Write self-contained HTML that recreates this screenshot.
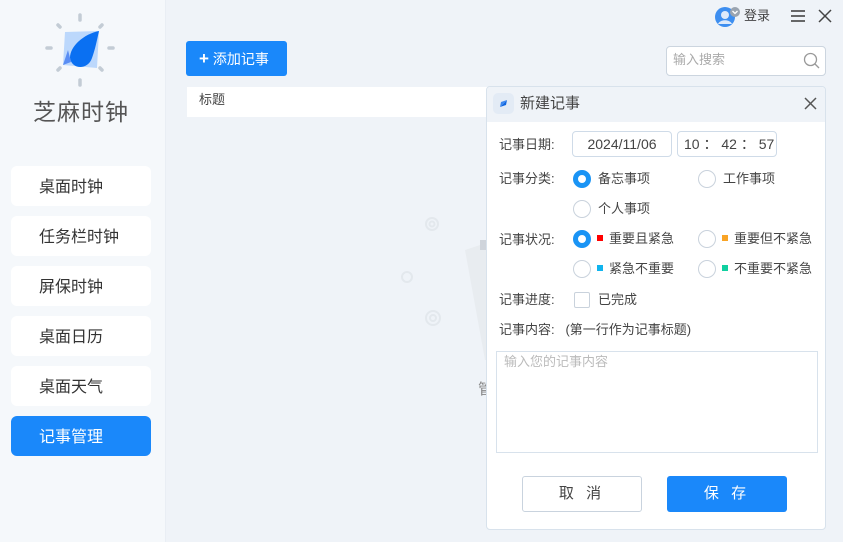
<!DOCTYPE html>
<html><head><meta charset="utf-8"><style>
*{margin:0;padding:0;box-sizing:border-box}
body{width:843px;height:542px;overflow:hidden;background:#eff3f8;font-family:"Liberation Sans","Noto Sans CJK SC",sans-serif;color:#333;position:relative}
.a{position:absolute;white-space:nowrap}
.side{left:0;top:0;width:166px;height:542px;background:#f5f8fb;border-right:1px solid #e9eef4}
.nav{left:11px;width:140px;height:40px;background:#fff;border-radius:6px;font-size:16px;line-height:40px;padding-left:28px;padding-top:2px;color:#333}
.nav.on{background:#1a88fa;color:#fff}
.lbl{font-size:13px;color:#444;line-height:18px}
.rad{width:18px;height:18px;border-radius:50%;border:1px solid #c9d2dc;background:#fff}
.rad.on{border:5px solid #1a94f5;background:#fff}
.opt{font-size:13px;color:#444;line-height:18px}
.sq{display:inline-block;width:6px;height:6px;margin-right:6px;vertical-align:2px}
</style></head><body>
<div class="a side"></div>
<svg class="a" style="left:40px;top:10px" width="80" height="80" viewBox="0 0 80 80">
<g stroke="#c3ccd5" stroke-width="3.5" stroke-linecap="round">
<line x1="40" y1="5" x2="40" y2="10"/><line x1="40" y1="70" x2="40" y2="75"/>
<line x1="7" y1="38" x2="11" y2="38"/><line x1="69" y1="38" x2="73" y2="38"/>
<line x1="18" y1="15" x2="20" y2="17"/><line x1="62" y1="15" x2="60" y2="17"/>
<line x1="18" y1="60" x2="20" y2="58"/><line x1="62" y1="60" x2="60" y2="58"/>
</g>
<polygon points="25,22 59,21 57,58 23,55" fill="#bcd8fc"/>
<path d="M59,21 C44,24 30,36 30,48 C32,60 48,60 52,48 C55,40 57,30 59,21Z" fill="#0a70f2"/>
<polygon points="23,55 31,52 28,40" fill="#5a8ef4"/>
</svg>
<div class="a" style="left:33px;top:93px;font-size:23px;color:#555;letter-spacing:1px">芝麻时钟</div>
<div class="a nav" style="top:166px">桌面时钟</div>
<div class="a nav" style="top:216px">任务栏时钟</div>
<div class="a nav" style="top:266px">屏保时钟</div>
<div class="a nav" style="top:316px">桌面日历</div>
<div class="a nav" style="top:366px">桌面天气</div>
<div class="a nav on" style="top:416px">记事管理</div>

<svg class="a" style="left:715px;top:6px" width="26" height="22" viewBox="0 0 26 22"><circle cx="10" cy="11" r="10" fill="#3d8ef0"/><circle cx="10" cy="9" r="4" fill="#dde9fa"/><path d="M3,18 C5,13 15,13 17,18Z" fill="#dde9fa"/><circle cx="20" cy="6" r="5" fill="#9aa4b0"/><path d="M17.5,5 L20,7.5 22.5,5" stroke="#fff" fill="none" stroke-width="1.3"/></svg>
<div class="a" style="left:744px;top:5px;font-size:13px;color:#444">登录</div>
<svg class="a" style="left:790px;top:9px" width="16" height="14"><g stroke="#444" stroke-width="1.6"><line x1="1" y1="2" x2="15" y2="2"/><line x1="1" y1="7" x2="15" y2="7"/><line x1="1" y1="12" x2="15" y2="12"/></g></svg>
<svg class="a" style="left:818px;top:9px" width="14" height="14"><g stroke="#444" stroke-width="1.5"><line x1="1" y1="1" x2="13" y2="13"/><line x1="13" y1="1" x2="1" y2="13"/></g></svg>

<div class="a" style="left:186px;top:41px;width:101px;height:35px;background:#1a88fa;border-radius:3px;color:#fff;font-size:14px;line-height:35px;padding-left:13px"><b style="font-size:17px">+</b> 添加记事</div>
<div class="a" style="left:666px;top:46px;width:160px;height:30px;background:#fff;border:1px solid #ccd5df;border-radius:4px;font-size:13px;color:#aaa;line-height:26px;padding-left:6px">输入搜索</div>
<svg class="a" style="left:803px;top:52px" width="18" height="18"><circle cx="7.5" cy="7.5" r="6" stroke="#999" fill="none" stroke-width="1.3"/><line x1="12" y1="12" x2="16" y2="16" stroke="#999" stroke-width="1.3"/></svg>
<div class="a" style="left:187px;top:87px;width:310px;height:30px;background:#fff;font-size:13px;color:#444;line-height:26px;padding-left:12px">标题</div>

<svg class="a" style="left:395px;top:210px" width="100" height="170"><g fill="none" stroke="#e3e8ed" stroke-width="2"><circle cx="12" cy="67" r="5"/><circle cx="37" cy="14" r="6"/><circle cx="37" cy="14" r="2.5"/><circle cx="38" cy="108" r="7"/><circle cx="38" cy="108" r="3"/></g><path d="M70 40 L100 30 L100 150 L90 150Z" fill="#e8ecf0"/><rect x="85" y="30" width="15" height="10" fill="#cfd4db"/></svg>
<div class="a" style="left:478px;top:378px;font-size:15px;color:#888">管</div>

<div class="a" style="left:486px;top:86px;width:340px;height:444px;background:#fff;border:1px solid #d8e2ec;border-radius:4px;overflow:hidden">
<div style="height:35px;background:#eff3f8"></div>
</div>
<div class="a" style="left:493px;top:93px;width:21px;height:21px;border-radius:5px;background:#e3ebf5"></div>
<svg class="a" style="left:493px;top:93px" width="21" height="21"><polygon points="7,14 14,7 13,12" fill="#1066e0"/><polygon points="7,14 14,7 8,9" fill="#3c88f0"/></svg>
<div class="a" style="left:520px;top:92px;font-size:15px;color:#444">新建记事</div>
<svg class="a" style="left:804px;top:97px" width="13" height="13"><g stroke="#555" stroke-width="1.5"><line x1="1" y1="1" x2="12" y2="12"/><line x1="12" y1="1" x2="1" y2="12"/></g></svg>

<div class="a lbl" style="left:499px;top:136px">记事日期:</div>
<div class="a" style="left:572px;top:131px;width:100px;height:26px;border:1px solid #cfdbe8;border-radius:4px;font-size:14px;line-height:24px;text-align:center;color:#444">2024/11/06</div>
<div class="a" style="left:677px;top:131px;width:100px;height:26px;border:1px solid #cfdbe8;border-radius:4px;font-size:14px;line-height:24px;padding-left:6px;color:#444">10 ： 42 ： 57</div>

<div class="a lbl" style="left:499px;top:170px">记事分类:</div>
<div class="a rad on" style="left:573px;top:170px"></div><div class="a opt" style="left:598px;top:170px">备忘事项</div>
<div class="a rad" style="left:698px;top:170px"></div><div class="a opt" style="left:723px;top:170px">工作事项</div>
<div class="a rad" style="left:573px;top:200px"></div><div class="a opt" style="left:598px;top:200px">个人事项</div>

<div class="a lbl" style="left:499px;top:231px">记事状况:</div>
<div class="a rad on" style="left:573px;top:230px"></div><div class="a opt" style="left:597px;top:230px"><span class="sq" style="background:#f00"></span>重要且紧急</div>
<div class="a rad" style="left:698px;top:230px"></div><div class="a opt" style="left:722px;top:230px"><span class="sq" style="background:#f9a426"></span>重要但不紧急</div>
<div class="a rad" style="left:573px;top:260px"></div><div class="a opt" style="left:597px;top:260px"><span class="sq" style="background:#10b4ee"></span>紧急不重要</div>
<div class="a rad" style="left:698px;top:260px"></div><div class="a opt" style="left:722px;top:260px"><span class="sq" style="background:#10d0a0"></span>不重要不紧急</div>

<div class="a lbl" style="left:499px;top:291px">记事进度:</div>
<div class="a" style="left:574px;top:292px;width:16px;height:16px;border:1px solid #c9d2dc;border-radius:2px"></div>
<div class="a opt" style="left:598px;top:291px">已完成</div>
<div class="a lbl" style="left:499px;top:321px">记事内容:&nbsp;&nbsp;&nbsp;(第一行作为记事标题)</div>
<div class="a" style="left:496px;top:351px;width:322px;height:102px;border:1px solid #d8e2ec;font-size:13px;color:#bbb;padding:0 7px;line-height:20px">输入您的记事内容</div>

<div class="a" style="left:522px;top:476px;width:120px;height:36px;border:1px solid #c9d3de;border-radius:3px;font-size:15px;line-height:34px;text-align:center;color:#444;letter-spacing:4px">取 消</div>
<div class="a" style="left:667px;top:476px;width:120px;height:36px;background:#1a88fa;border-radius:3px;font-size:15px;line-height:36px;text-align:center;color:#fff;letter-spacing:4px">保 存</div>
</body></html>
